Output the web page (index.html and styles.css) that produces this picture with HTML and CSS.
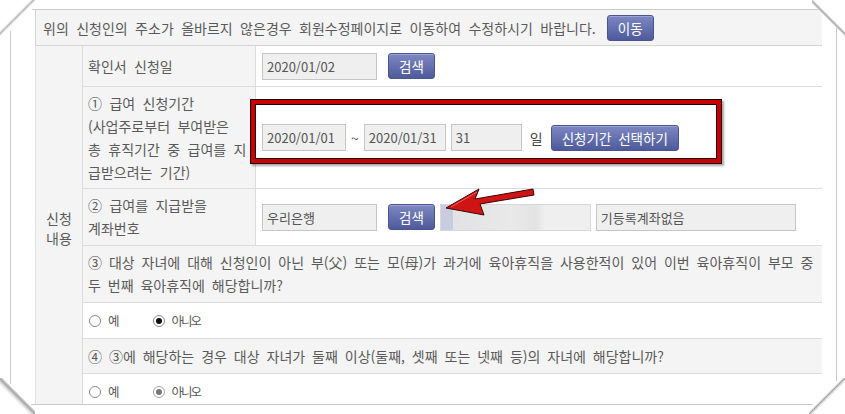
FILE: index.html
```html
<!DOCTYPE html>
<html lang="ko">
<head>
    <meta charset="utf-8">
    <title>육아휴직 급여 신청</title>
    <link rel="stylesheet" href="styles.css">
</head>
<body>
    <div class="frame">
        <div class="sheet">
            <div class="notice">
                <span>위의 신청인의 주소가 올바르지 않은경우 회원수정페이지로 이동하여 수정하시기 바랍니다.</span>
                <button class="btn" type="button">이동</button>
            </div>

            <div class="form">
                <div class="group">신청<br>내용</div>

                <div class="label">확인서 신청일</div>
                <div class="value">
                    <input class="field w115" type="text" value="2020/01/02" readonly>
                    <button class="btn btn-search" type="button">검색</button>
                </div>

                <div class="label">① 급여 신청기간<br>(사업주로부터 부여받은<br>총 휴직기간 중 급여를 지<br>급받으려는 기간)</div>
                <div class="value">
                    <input class="field w84" type="text" value="2020/01/01" readonly>
                    <span class="tilde">~</span>
                    <input class="field w82" type="text" value="2020/01/31" readonly>
                    <input class="field w71" type="text" value="31" readonly>
                    <span class="unit">일</span>
                    <button class="btn" type="button">신청기간 선택하기</button>
                </div>

                <div class="label">② 급여를 지급받을<br>계좌번호</div>
                <div class="value">
                    <input class="field w115" type="text" value="우리은행" readonly>
                    <button class="btn btn-search" type="button">검색</button>
                    <input class="field w151 masked" type="text" value="" readonly>
                    <input class="field w200" type="text" value="기등록계좌없음" readonly>
                </div>

                <div class="question">③ 대상 자녀에 대해 신청인이 아닌 부(父) 또는 모(母)가 과거에 육아휴직을 사용한적이 있어 이번 육아휴직이 부모 중<br>두 번째 육아휴직에 해당합니까?</div>
                <div class="choice">
                    <label class="opt"><span class="radio"></span>예</label>
                    <label class="opt"><span class="radio on"></span>아니오</label>
                </div>

                <div class="question">④ ③에 해당하는 경우 대상 자녀가 둘째 이상(둘째, 셋째 또는 넷째 등)의 자녀에 해당합니까?</div>
                <div class="choice last">
                    <label class="opt"><span class="radio"></span>예</label>
                    <label class="opt"><span class="radio on off"></span>아니오</label>
                </div>
            </div>
        </div>
    </div>

    <!-- paper frame corners -->
    <span class="fold fold-tl"></span>
    <span class="fold fold-tr"></span>
    <span class="fold fold-bl"></span>
    <span class="fold fold-br"></span>

    <!-- annotation -->
    <div class="mark-box"></div>
    <svg class="mark-arrow" width="100" height="40" viewBox="0 0 100 40">
        <polygon points="6,28 39,9 35,19 93,9 94,15 40,24 44,35" fill="#d01414" stroke="#3a0505" stroke-width="1" stroke-linejoin="round"/>
        <polyline points="11,27 37,12" fill="none" stroke="#f06060" stroke-width="1"/>
    </svg>
</body>
</html>
```

FILE: styles.css
```css
*{
    margin: 0;
    padding: 0;
}

body{
    padding: 9px 0 0 10px;
    background: #fff;
    font-family: "Noto Sans CJK KR", "Noto Sans", sans-serif;
    font-size: 14px;
    color: #5a5a5a;
    word-spacing: 3.5px;
}

.frame{
    width: 827px;
    height: 396px;
    box-sizing: border-box;
    border: 1px solid #cbcbcb;
    padding-left: 24px;
}

.sheet{
    width: 787px;
    height: 394px;
    overflow: hidden;
}

.notice{
    height: 36px;
    box-sizing: border-box;
    display: flex;
    align-items: center;
    gap: 11px;
    padding-left: 7px;
    background: #f4f4f4;
    border-left: 1px solid #d3d3d3;
    border-bottom: 1px solid #d3d3d3;
}

.btn{
    height: 26px;
    padding: 0 10px;
    border: 1px solid #4a5490;
    border-radius: 3px;
    background: linear-gradient(#7c87c3, #4f5a9b);
    color: #fff;
    font: inherit;
    font-size: 13.5px;
    word-spacing: 3px;
    box-shadow: inset 0 1px 0 rgba(255,255,255,.25);
}

.btn-search{
    margin-left: 6px;
}

.form{
    display: grid;
    grid-template-columns: 47px 174px 1fr;
    grid-template-rows: 41px 102px 57px 57px 36px 35px 36px;
}

.form > div{
    box-sizing: border-box;
    display: flex;
    align-items: center;
}

.group{
    grid-row: 1 / 8;
    justify-content: center;
    text-align: center;
    line-height: 20px;
    background: #f4f4f4;
    border-left: 1px solid #e2e2e2;
}

.label{
    padding: 0 5px;
    line-height: 23px;
    background: #f4f4f4;
    border-left: 1px solid #dcdcdc;
    border-right: 1px solid #dcdcdc;
    border-bottom: 1px solid #dcdcdc;
}

.value{
    gap: 5px;
    padding-left: 6px;
    border-bottom: 1px solid #dcdcdc;
}

.question{
    grid-column: 2 / 4;
    padding: 0 5px;
    line-height: 23px;
    white-space: nowrap;
    word-spacing: 3px;
    background: #f4f4f4;
    border-left: 1px solid #dcdcdc;
    border-bottom: 1px solid #dcdcdc;
}

.choice{
    grid-column: 2 / 4;
    padding-left: 6px;
    border-left: 1px solid #dcdcdc;
    border-bottom: 1px solid #dcdcdc;
}

.form > .choice.last{
    align-items: flex-start;
    padding-top: 8px;
}

.field{
    height: 27px;
    box-sizing: border-box;
    padding: 0 4px;
    border: 1px solid #c6c6c6;
    background: #efefef;
    color: #555;
    font: inherit;
    font-size: 13px;
    word-spacing: 3px;
    outline: none;
}

.w71{ width: 71px; }
.w82{ width: 82px; }
.w84{ width: 84px; }
.w115{ width: 115px; }
.w151{ width: 151px; }
.w200{ width: 200px; }

.masked{
    border-color: #d8d8d8;
    background: linear-gradient(to right, #c9cbe0 0, #c9cbe0 12px, #e2e2e5 12px, #e6e6e6 45px, #e9e9e9 70px, #e3e3e3 95px, #efefef 104px);
}

.tilde{
    color: #444;
}

.unit{
    margin: 0 3px;
    color: #444;
}

.opt{
    display: flex;
    align-items: center;
    gap: 7px;
    font-size: 12.5px;
    letter-spacing: -2px;
}

.opt + .opt{
    margin-left: 35px;
}

.radio{
    width: 12px;
    height: 12px;
    box-sizing: border-box;
    border: 1px solid #8a8a8a;
    border-radius: 50%;
    background: #fff;
    display: flex;
    align-items: center;
    justify-content: center;
}

.radio.on::after{
    content: "";
    width: 6px;
    height: 6px;
    border-radius: 50%;
    background: #111;
}

.radio.off{
    border-color: #a5a5a5;
}

.radio.off::after{
    background: #777;
}

/* folded paper corners */
.fold{
    position: absolute;
    width: 36px;
    height: 36px;
}

.fold-tl{
    left: 0;
    top: 0;
    background: linear-gradient(135deg, #fff 0, #fff 42%, #ececec 44%, #b4b4b4 46.5%, #e2e2e2 49%, #fff 51%, #fff 58%, transparent 58%);
}

.fold-tr{
    left: 812px;
    top: 0;
    width: 33px;
    background: linear-gradient(225deg, #fff 0, #fff 45%, #dedede 47%, #a8a8a8 49.5%, #dcdcdc 52%, transparent 53%);
}

.fold-bl{
    left: 0;
    top: 378px;
    width: 35px;
    background: linear-gradient(45deg, #fff 0, #fff 40%, #f0f0f0 43%, #c8c8c8 47%, #a4a4a4 50%, #d4d4d4 53%, #fff 55%, #fff 57%, transparent 57%);
}

.fold-br{
    left: 809px;
    top: 378px;
    background: linear-gradient(315deg, #fff 0, #fff 44%, #d4d4d4 48%, #a8a8a8 50%, #e0e0e0 52%, #fff 54%, #fff 57%, transparent 57%);
}

/* red annotation */
.mark-box{
    position: absolute;
    left: 251px;
    top: 100px;
    width: 470px;
    height: 63px;
    box-sizing: border-box;
    border: 4px solid #c80000;
    box-shadow: 0 0 0 1px #1c0000, inset 0 0 0 1px #1c0000, 2px 2px 2px 1px rgba(0,0,0,.35);
}

.mark-arrow{
    position: absolute;
    left: 440px;
    top: 180px;
}
```
